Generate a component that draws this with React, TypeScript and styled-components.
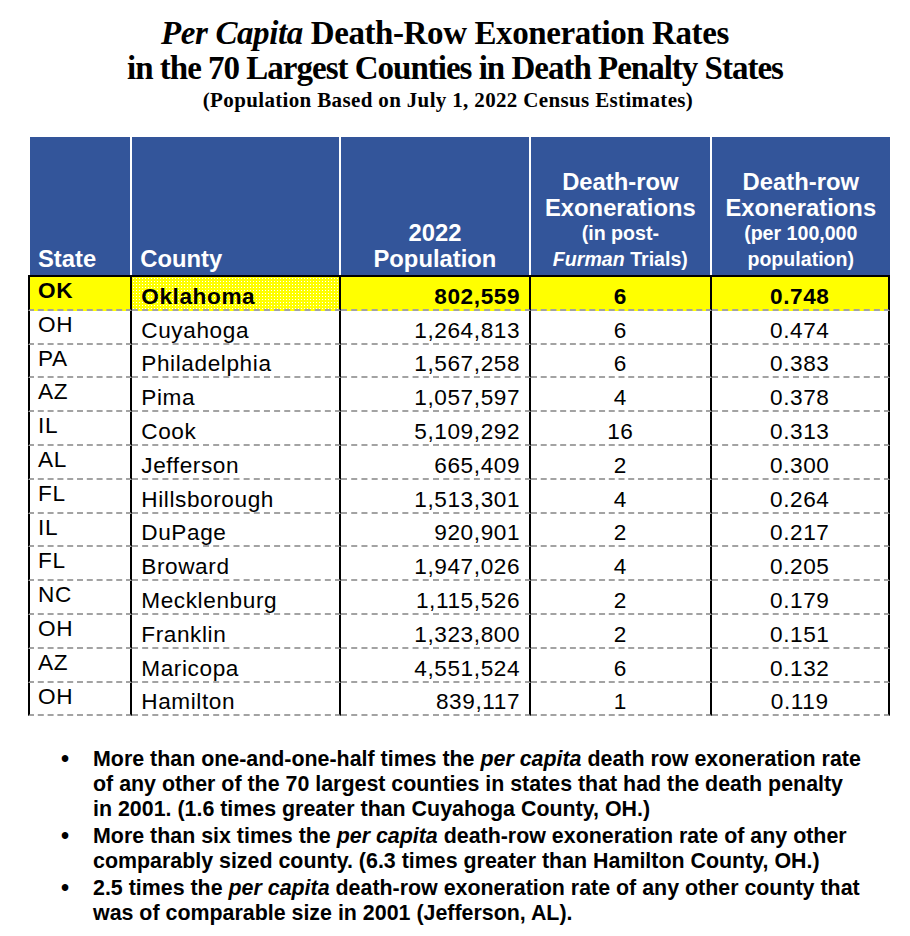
import React from "react";
import styled, { createGlobalStyle } from "styled-components";

const GlobalStyle = createGlobalStyle`
  html, body {
    margin: 0;
    padding: 0;
    background: #ffffff;
  }
  body {
    font-family: "Liberation Sans", Arial, sans-serif;
    color: #000;
  }
`;

const Page = styled.div`
  width: 910px;
  padding-top: 16px;
  box-sizing: border-box;
`;

const TitleBlock = styled.header`
  font-family: "Liberation Serif", "Times New Roman", serif;
  font-weight: bold;
  text-align: center;
`;

const TitleLine = styled.div<{ $size: number; $lh: number; $ls?: number; $shift?: number }>`
  font-size: ${(p) => p.$size}px;
  line-height: ${(p) => p.$lh}px;
  letter-spacing: ${(p) => p.$ls ?? 0}px;
  padding-right: ${(p) => Math.max(0, p.$shift ?? 0)}px;
  padding-left: ${(p) => Math.max(0, -(p.$shift ?? 0))}px;
`;

const Table = styled.table`
  border-collapse: separate;
  border-spacing: 0;
  table-layout: fixed;
  margin-top: 22px;
  margin-left: 28px;
  width: 862px;
`;

const HeadCell = styled.th<{ $align: "left" | "center"; $w: number; $last?: boolean }>`
  width: ${(p) => p.$w}px;
  height: 135px;
  background: #33559a;
  color: #ffffff;
  font-family: "Liberation Sans", Arial, sans-serif;
  font-weight: bold;
  font-size: 23.8px;
  line-height: 26px;
  text-align: ${(p) => p.$align};
  vertical-align: bottom;
  padding: 0 0 3px ${(p) => (p.$align === "left" ? "8px" : "0")};
  border-right: ${(p) => (p.$last ? "none" : "2px solid #ffffff")};
  box-sizing: content-box;
`;

const FirstHeadCell = styled(HeadCell)`
  border-left: 2px solid #ffffff;
`;

const HeadLine = styled.span<{ $small?: boolean }>`
  display: block;
  font-size: ${(p) => (p.$small ? "19.6px" : "23.8px")};
  line-height: ${(p) => (p.$small ? "25.5px" : "26px")};
  white-space: nowrap;
`;

const Row = styled.tr<{ $highlight?: boolean }>`
  background: ${(p) => (p.$highlight ? "#ffff00" : "#ffffff")};
`;

type Align = "left" | "right" | "center";

const Cell = styled.td<{
  $align: Align;
  $top?: boolean;
  $first?: boolean;
  $bold?: boolean;
  $stipple?: boolean;
  $highlightTop?: boolean;
}>`
  box-sizing: border-box;
  height: ${(p) => (p.$highlightTop ? 35.8 : 33.8)}px;
  padding: ${(p) => (p.$top ? "1px" : "0")} ${(p) => (p.$align === "right" ? "9px" : "0")} 0
    ${(p) => (p.$align === "left" ? (p.$first ? "8px" : "9px") : "0")};
  font-family: "Liberation Sans", Arial, sans-serif;
  font-size: 22.6px;
  line-height: 25px;
  letter-spacing: 0.6px;
  font-weight: ${(p) => (p.$bold ? "bold" : "normal")};
  text-align: ${(p) => p.$align};
  vertical-align: ${(p) => (p.$top ? "top" : "bottom")};
  white-space: nowrap;
  overflow: hidden;
  border-right: 2px solid #000;
  border-left: ${(p) => (p.$first ? "2px solid #000" : "none")};
  border-bottom: 2px dashed #a3a3a3;
  border-top: ${(p) => (p.$highlightTop ? "2px solid #000" : "none")};
  ${(p) =>
    p.$stipple
      ? `background-color: #ffff00;
         background-image: radial-gradient(circle, #ffffff 0.6px, transparent 0.9px);
         background-size: 3px 3px;`
      : ""}
`;

const Bullets = styled.ul`
  list-style: none;
  margin: 31px 0 0 0;
  padding: 0 0 0 61px;
  font-family: "Liberation Sans", Arial, sans-serif;
  font-weight: bold;
  font-size: 21.4px;
  line-height: 25px;
`;

const Bullet = styled.li`
  display: flex;
  margin-bottom: 2px;
`;

const Dot = styled.span`
  flex: 0 0 32px;
  font-size: 23px;
`;

const BulletText = styled.span`
  width: 771px;
`;

type RowData = { state: string; county: string; pop: string; ex: string; rate: string };

const rows: RowData[] = [
  { state: "OK", county: "Oklahoma", pop: "802,559", ex: "6", rate: "0.748" },
  { state: "OH", county: "Cuyahoga", pop: "1,264,813", ex: "6", rate: "0.474" },
  { state: "PA", county: "Philadelphia", pop: "1,567,258", ex: "6", rate: "0.383" },
  { state: "AZ", county: "Pima", pop: "1,057,597", ex: "4", rate: "0.378" },
  { state: "IL", county: "Cook", pop: "5,109,292", ex: "16", rate: "0.313" },
  { state: "AL", county: "Jefferson", pop: "665,409", ex: "2", rate: "0.300" },
  { state: "FL", county: "Hillsborough", pop: "1,513,301", ex: "4", rate: "0.264" },
  { state: "IL", county: "DuPage", pop: "920,901", ex: "2", rate: "0.217" },
  { state: "FL", county: "Broward", pop: "1,947,026", ex: "4", rate: "0.205" },
  { state: "NC", county: "Mecklenburg", pop: "1,115,526", ex: "2", rate: "0.179" },
  { state: "OH", county: "Franklin", pop: "1,323,800", ex: "2", rate: "0.151" },
  { state: "AZ", county: "Maricopa", pop: "4,551,524", ex: "6", rate: "0.132" },
  { state: "OH", county: "Hamilton", pop: "839,117", ex: "1", rate: "0.119" },
];

export default function App() {
  return (
    <Page>
      <GlobalStyle />
      <TitleBlock>
        <TitleLine $size={33} $lh={35} $ls={-0.4} $shift={20}>
          <i>Per Capita</i> Death-Row Exoneration Rates
        </TitleLine>
        <TitleLine $size={33} $lh={35} $ls={-1}>
          in the 70 Largest Counties in Death Penalty States
        </TitleLine>
        <TitleLine $size={21} $lh={29} $ls={0.35} $shift={14}>
          (Population Based on July 1, 2022 Census Estimates)
        </TitleLine>
      </TitleBlock>

      <Table>
        <thead>
          <tr>
            <FirstHeadCell $align="left" $w={92}>
              <HeadLine>State</HeadLine>
            </FirstHeadCell>
            <HeadCell $align="left" $w={198}>
              <HeadLine>County</HeadLine>
            </HeadCell>
            <HeadCell $align="center" $w={188}>
              <HeadLine>2022</HeadLine>
              <HeadLine>Population</HeadLine>
            </HeadCell>
            <HeadCell $align="center" $w={178}>
              <HeadLine>Death-row</HeadLine>
              <HeadLine>Exonerations</HeadLine>
              <HeadLine $small>(in post-</HeadLine>
              <HeadLine $small>
                <i>Furman</i> Trials)
              </HeadLine>
            </HeadCell>
            <HeadCell $align="center" $w={178} $last>
              <HeadLine>Death-row</HeadLine>
              <HeadLine>Exonerations</HeadLine>
              <HeadLine $small>(per 100,000</HeadLine>
              <HeadLine $small>population)</HeadLine>
            </HeadCell>
          </tr>
        </thead>
        <tbody>
          {rows.map((r, i) => {
            const hl = i === 0;
            return (
              <Row key={r.county} $highlight={hl}>
                <Cell $align="left" $first $top $bold={hl} $highlightTop={hl}>
                  {r.state}
                </Cell>
                <Cell $align="left" $bold={hl} $stipple={hl} $highlightTop={hl}>
                  {r.county}
                </Cell>
                <Cell $align="right" $bold={hl} $highlightTop={hl}>
                  {r.pop}
                </Cell>
                <Cell $align="center" $bold={hl} $highlightTop={hl}>
                  {r.ex}
                </Cell>
                <Cell $align="center" $bold={hl} $highlightTop={hl}>
                  {r.rate}
                </Cell>
              </Row>
            );
          })}
        </tbody>
      </Table>

      <Bullets>
        <Bullet>
          <Dot>•</Dot>
          <BulletText>
            More than one-and-one-half times the <i>per capita</i> death row exoneration rate
            of any other of the 70 largest counties in states that had the death penalty
            in 2001. (1.6 times greater than Cuyahoga County, OH.)
          </BulletText>
        </Bullet>
        <Bullet>
          <Dot>•</Dot>
          <BulletText>
            More than six times the <i>per capita</i> death-row exoneration rate of any other
            comparably sized county. (6.3 times greater than Hamilton County, OH.)
          </BulletText>
        </Bullet>
        <Bullet>
          <Dot>•</Dot>
          <BulletText>
            2.5 times the <i>per capita</i> death-row exoneration rate of any other county that
            was of comparable size in 2001 (Jefferson, AL).
          </BulletText>
        </Bullet>
      </Bullets>
    </Page>
  );
}
